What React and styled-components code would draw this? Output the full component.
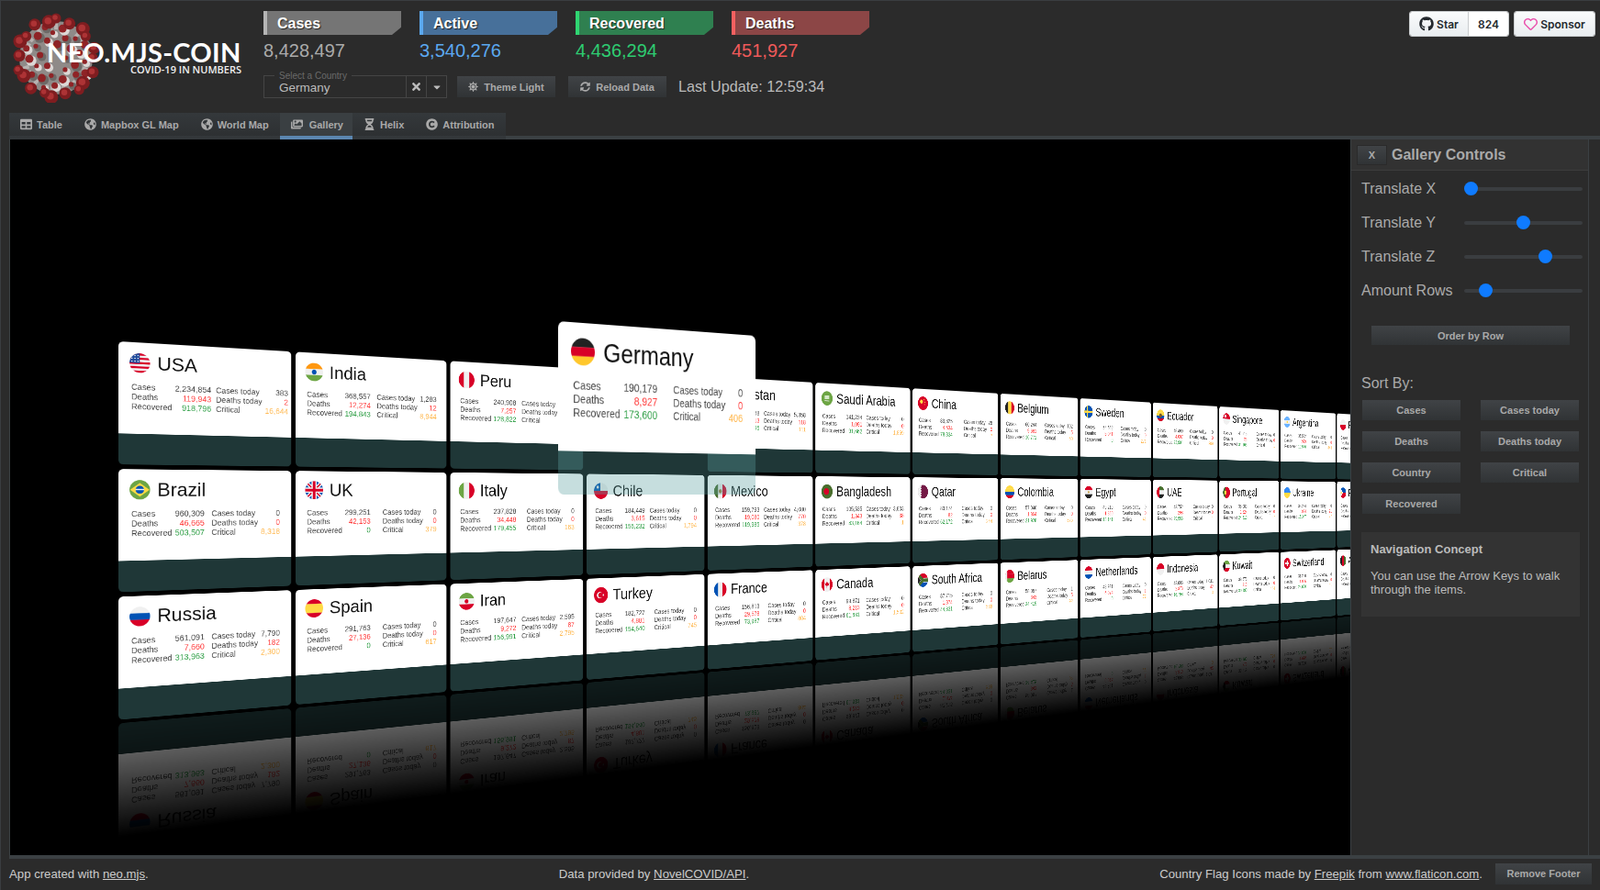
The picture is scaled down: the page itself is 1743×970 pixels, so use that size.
import React from "react";
import styled, { createGlobalStyle } from "styled-components";
import {
  FaCopyright,
  FaGithub,
  FaGlobeAmericas,
  FaHourglassHalf,
  FaImages,
  FaRegHeart,
  FaSun,
  FaSyncAlt,
  FaTable,
  FaTimes,
  FaCaretDown,
} from "react-icons/fa";

const SCENE_X = 11;
const SCENE_Y = 152;

// perspective fit: x' = (a*u + b) / (1 + c*u), y' = (d*u + e*v + f) / (1 + c*u)
const planeMatrix = ({ a, b, c, d, e, f }) =>
  `matrix3d(${a - SCENE_X * c},${d - SCENE_Y * c},0,${c},0,${e},0,0,0,0,1,0,${b - SCENE_X},${f - SCENE_Y},0,1)`;

const GRID_MATRIX = planeMatrix({ a: 0.70252, b: 129, c: 0.000235747, d: 0.1275, e: 0.627, f: 372 });
const SELECTED_MATRIX = planeMatrix({ a: 0.9704, b: 608, c: 0.000308, d: 0.1662, e: 0.8832, f: 350 });

const GlobalStyle = createGlobalStyle`
  html, body {
    margin: 0;
    background: #2b2b2b;
  }
  * {
    box-sizing: border-box;
  }
  body {
    font-family: "Liberation Sans", Arial, sans-serif;
    color: #bbb;
  }
`;

const Viewport = styled.div`
  height: 970px;
  width: 1743px;
  display: flex;
  flex-direction: column;
  overflow: hidden;
  background: #2b2b2b;
  border-top: 1px solid #3a3d40;
  border-left: 1px solid #3a3d40;
`;

const Header = styled.header`
  height: 122px;
  flex: none;
  display: flex;
  padding: 11px 5px 0 0;
`;

const Logo = styled.div`
  position: relative;
  width: 286px;
  flex: none;
`;

const LogoTitle = styled.div`
  position: absolute;
  left: 50px;
  top: 28px;
  font-family: Lato, sans-serif;
  font-weight: 700;
  font-size: 29px;
  letter-spacing: 0.3px;
  line-height: 34px;
  color: #fff;
  white-space: nowrap;
`;

const LogoSub = styled.div`
  position: absolute;
  right: 24px;
  top: 57px;
  font-family: "Open Sans", sans-serif;
  font-weight: 600;
  font-size: 11px;
  line-height: 14px;
  color: #eee;
  white-space: nowrap;
`;

const HeaderMain = styled.div`
  display: flex;
  flex-direction: column;
  gap: 13px;
`;

const Stats = styled.div`
  display: flex;
  gap: 20px;
`;

const Stat = styled.div`
  width: 150px;
`;

const StatHead = styled.div`
  height: 26px;
  padding-left: 11px;
  border-left: 4px solid ${(p) => p.$edge};
  background: ${(p) => p.$bg};
  clip-path: polygon(0 0, 100% 0, 100% 68%, calc(100% - 10px) 100%, 0 100%);
  color: #fff;
  font-weight: 700;
  font-size: 16px;
  line-height: 27px;
  text-shadow: 1px 1px 1px #222;
`;

const StatValue = styled.div`
  height: 31px;
  font-size: 20px;
  line-height: 34px;
  color: ${(p) => p.$color};
`;

const Controls = styled.div`
  display: flex;
  align-items: center;
  height: 25px;
`;

const CountryField = styled.div`
  position: relative;
  width: 200px;
  height: 25px;
  display: flex;
  border: 1px solid #454545;
`;

const CountryLabel = styled.span`
  position: absolute;
  left: 11px;
  top: -6px;
  padding: 0 5px;
  background: #2b2b2b;
  font-size: 10px;
  line-height: 11px;
  color: #6a6a6a;
`;

const CountryValue = styled.div`
  flex: 1;
  padding: 4px 0 0 16px;
  font-size: 13.5px;
  line-height: 17px;
  color: #bbb;
`;

const FieldTrigger = styled.div`
  width: 22px;
  display: flex;
  align-items: center;
  justify-content: center;
  border-left: 1px solid #454545;
  color: #bbb;
  font-size: ${(p) => p.$size}px;
`;

const GreyButton = styled.button`
  height: 23px;
  padding: 0;
  border: none;
  display: inline-flex;
  align-items: center;
  justify-content: center;
  gap: 6px;
  background: linear-gradient(#404346, #303335);
  color: #a9a9a9;
  font-family: inherit;
  font-weight: 700;
  font-size: 11px;
`;

const HeaderButton = styled(GreyButton)`
  width: 107px;
  margin-left: ${(p) => p.$gap}px;
  font-size: 11px;
`;

const LastUpdate = styled.span`
  margin-left: 13px;
  font-size: 16.2px;
  color: #bbb;
`;

const GithubButtons = styled.div`
  margin-left: auto;
  display: flex;
  gap: 5px;
  height: 28px;
`;

const GithubGroup = styled.div`
  display: flex;
  height: 28px;
  border: 1px solid #c9ccce;
  border-radius: 3px;
  overflow: hidden;
  font-family: Inter, sans-serif;
  font-weight: 600;
  font-size: 12px;
  color: #24292e;
`;

const GithubAction = styled.div`
  width: ${(p) => p.$width}px;
  display: flex;
  align-items: center;
  justify-content: center;
  gap: 3px;
  background: linear-gradient(#fafbfc, #e9edf0);
`;

const GithubCount = styled.div`
  width: 44px;
  display: flex;
  align-items: center;
  justify-content: center;
  background: #fff;
  border-left: 1px solid #c9ccce;
`;

const Tabs = styled.nav`
  flex: none;
  margin: 0 0 0 9px;
  display: flex;
  height: 29px;
  border-bottom: 4px solid #3b4043;
`;

const Tab = styled.div`
  height: 29px;
  padding: ${(p) => (p.$active ? "0 10px 0 12px" : "0 12px")};
  display: flex;
  align-items: center;
  gap: ${(p) => (p.$active ? 7 : 5)}px;
  background: ${(p) => (p.$active ? "#3a3f42" : "linear-gradient(#34383b, #2d3032)")};
  border-bottom: 4px solid ${(p) => (p.$active ? "#5b86b0" : "transparent")};
  color: #a9a9a9;
  font-weight: 700;
  font-size: 11px;
  svg {
    font-size: 13px;
  }
`;

const Main = styled.main`
  flex: 1;
  min-height: 0;
  margin-left: 9px;
  display: flex;
  border-left: 1px solid #3b4043;
  border-bottom: 4px solid #3b4043;
`;

const Scene = styled.div`
  position: relative;
  width: 1460px;
  flex: none;
  background: #000;
  overflow: hidden;
`;

const Plane = styled.div`
  position: absolute;
  left: 0;
  top: 0;
  display: grid;
  grid-template-columns: repeat(13, 300px);
  grid-auto-rows: 214px;
  gap: 8px;
  transform-origin: 0 0;
  transform: ${GRID_MATRIX};
  -webkit-box-reflect: below 6px linear-gradient(to bottom, transparent 70%, rgba(0, 0, 0, 0.5) 100%);
`;

const Card = styled.article`
  width: 300px;
  height: 214px;
  display: grid;
  grid-template-rows: 160px 54px;
  border-radius: 8px;
  overflow: hidden;
`;

const SelectedCard = styled(Card)`
  position: absolute;
  left: 0;
  top: 0;
  transform-origin: 0 0;
  transform: ${SELECTED_MATRIX};
`;

const CardBody = styled.div`
  background: #fff;
  padding: 19px 21px 0 18px;
`;

const CardFoot = styled.div`
  background: rgba(90, 160, 160, 0.345);
`;

const CardHead = styled.div`
  display: flex;
  align-items: center;
  gap: 12px;
  height: 34px;
  margin-bottom: 17px;
`;

const CardTitle = styled.h3`
  margin: 0;
  font-weight: 400;
  font-size: 33px;
  line-height: 34px;
  color: #111;
  white-space: nowrap;
`;

const FlagIcon = styled.svg`
  width: 34px;
  height: 34px;
  flex: none;
  border-radius: 50%;
`;

const CardTables = styled.div`
  width: 258px;
  margin-left: 3px;
  display: flex;
  justify-content: space-between;
  gap: 8px;
`;

const StatTable = styled.table`
  border-collapse: collapse;
  flex: none;
  font-size: 14px;
  line-height: 17px;
  td {
    padding: 0;
    white-space: nowrap;
  }
`;

const StatLabel = styled.td`
  color: #444;
`;

const StatNumber = styled.td`
  && {
    padding-left: 5px;
  }
  text-align: right;
  color: ${(p) => p.$color || "#444"};
`;

const Panel = styled.aside`
  width: 260px;
  flex: none;
  border-left: 1px solid #3b4043;
  border-right: 1px solid #3b4043;
`;

const PanelHead = styled.div`
  height: 34px;
  display: flex;
  align-items: center;
  gap: 5px;
  padding-left: 6px;
  background: #323232;
  border-bottom: 1px solid #3d3d3d;
  color: #aaa;
  font-weight: 700;
  font-size: 16px;
`;

const CloseButton = styled(GreyButton)`
  width: 33px;
  height: 22px;
  border: 1px solid #2a2a2a;
`;

const PanelBody = styled.div`
  padding: 1px 0 0 11px;
`;

const SliderRow = styled.label`
  height: 37px;
  display: flex;
  align-items: center;
  font-size: 16px;
  color: #aaa;
  span {
    width: 112px;
  }
`;

const Slider = styled.input`
  appearance: none;
  -webkit-appearance: none;
  width: 129px;
  height: 15px;
  margin: 0;
  background: transparent;
  &::-webkit-slider-runnable-track {
    height: 4px;
    border-radius: 2px;
    background: #3a3d40;
  }
  &::-webkit-slider-thumb {
    -webkit-appearance: none;
    width: 15px;
    height: 15px;
    margin-top: -5.5px;
    border-radius: 50%;
    background: #0f7bff;
  }
`;

const OrderButton = styled(GreyButton)`
  display: flex;
  width: 216px;
  height: 21px;
  margin: 20px 0 0 11px;
`;

const SortTitle = styled.div`
  margin-top: 32px;
  font-size: 16px;
  line-height: 20px;
  color: #aaa;
`;

const SortGrid = styled.div`
  display: grid;
  grid-template-columns: 107px 107px;
  column-gap: 22px;
  row-gap: 12px;
  margin: 8px 0 0 1px;
`;

const SortButton = styled(GreyButton)`
  width: 107px;
  height: 22px;
`;

const InfoBox = styled.section`
  width: 238px;
  height: 92px;
  margin-top: 20px;
  padding: 11px 10px;
  background: #333;
  font-size: 13px;
  line-height: 15px;
  color: #bbb;
  h4 {
    margin: 0 0 14px;
    font-size: 13px;
    line-height: 15px;
    color: #bbb;
  }
  p {
    margin: 0;
  }
`;

const Footer = styled.footer`
  flex: none;
  height: 34px;
  display: flex;
  align-items: center;
  justify-content: space-between;
  padding: 0 9px 2px;
  font-size: 13.2px;
  color: #ccc;
  a {
    color: #ccc;
  }
`;

const FooterRight = styled.div`
  display: flex;
  align-items: center;
`;

const RemoveButton = styled(GreyButton)`
  width: 105px;
  margin-left: 14px;
`;

// flags
const H = ({ c }) =>
  c.map((fill, i) => <rect key={i} x="0" y={(i * 34) / c.length} width="34" height={34 / c.length + 0.2} fill={fill} />);
const V = ({ c }) =>
  c.map((fill, i) => <rect key={i} x={(i * 34) / c.length} y="0" width={34 / c.length + 0.2} height="34" fill={fill} />);
const Dot = ({ x = 17, y = 17, r = 5, fill }) => <circle cx={x} cy={y} r={r} fill={fill} />;

const W = "#f0f0f0";
const R = "#d80027";
const G = "#6da544";
const B = "#0052b4";
const Y = "#ffda44";
const K = "#222";

const FLAGS = {
  USA: (
    <>
      <H c={[R, W, R, W, R, W, R, W, R]} />
      <rect width="17" height="17" fill="#1e4a9c" />
      {[4, 9, 14].map((y) => [4, 9, 14].map((x) => <Dot key={x + "" + y} x={x} y={y} r="1.2" fill={W} />))}
    </>
  ),
  India: (
    <>
      <H c={["#ff9811", W, G]} />
      <Dot r="4.5" fill={B} />
    </>
  ),
  Peru: <V c={[R, W, R]} />,
  Germany: <H c={[K, R, "#ffc72c"]} />,
  Pakistan: (
    <>
      <V c={[W, "#496e2d", "#496e2d", "#496e2d"]} />
      <Dot x="21" r="6" fill={W} />
    </>
  ),
  "Saudi Arabia": (
    <>
      <H c={[G]} />
      <rect x="10" y="10" width="14" height="9" fill="#d5e8c8" />
      <rect x="10" y="22" width="14" height="2" fill={W} />
    </>
  ),
  China: (
    <>
      <H c={[R]} />
      <Dot x="12" y="13" r="5" fill={Y} />
      <Dot x="21" y="8" r="1.6" fill={Y} />
      <Dot x="24" y="14" r="1.6" fill={Y} />
      <Dot x="22" y="20" r="1.6" fill={Y} />
    </>
  ),
  Belgium: <V c={[K, Y, R]} />,
  Sweden: (
    <>
      <H c={[B]} />
      <rect x="9" width="6" height="34" fill={Y} />
      <rect y="14" width="34" height="6" fill={Y} />
    </>
  ),
  Ecuador: (
    <>
      <H c={[Y, Y, B, R]} />
      <Dot r="6" fill="#7a5b2b" />
    </>
  ),
  Singapore: (
    <>
      <H c={[R, W]} />
      <Dot x="11" y="9" r="5" fill={W} />
    </>
  ),
  Argentina: (
    <>
      <H c={["#6ab2ff", W, "#6ab2ff"]} />
      <Dot r="3.5" fill={Y} />
    </>
  ),
  Poland: <H c={[W, R]} />,
  Brazil: (
    <>
      <H c={[G]} />
      <polygon points="17,5 33,17 17,29 1,17" fill={Y} />
      <Dot r="7" fill={B} />
      <rect x="10" y="15.5" width="14" height="2" fill={W} />
    </>
  ),
  UK: (
    <>
      <H c={[B]} />
      <path d="M0 0L34 34M34 0L0 34" stroke={W} strokeWidth="7" />
      <path d="M0 0L34 34M34 0L0 34" stroke={R} strokeWidth="2.5" />
      <rect x="12" width="10" height="34" fill={W} />
      <rect y="12" width="34" height="10" fill={W} />
      <rect x="14.5" width="5" height="34" fill={R} />
      <rect y="14.5" width="34" height="5" fill={R} />
    </>
  ),
  Italy: <V c={[G, W, R]} />,
  Chile: (
    <>
      <H c={[W, R]} />
      <rect width="16" height="17" fill={B} />
      <Dot x="9" y="9" r="3" fill={W} />
    </>
  ),
  Mexico: (
    <>
      <V c={["#496e2d", W, R]} />
      <Dot r="4.5" fill="#a2803f" />
    </>
  ),
  Bangladesh: (
    <>
      <H c={["#496e2d"]} />
      <Dot x="15" r="8" fill={R} />
    </>
  ),
  Qatar: (
    <>
      <H c={["#751a46"]} />
      <polygon points="0,0 9,0 13,3 9,6 13,9 9,12 13,15 9,18 13,21 9,24 13,27 9,30 13,34 0,34" fill={W} />
    </>
  ),
  Colombia: <H c={[Y, Y, B, R]} />,
  Egypt: (
    <>
      <H c={[R, W, K]} />
      <Dot r="3" fill="#c8a24a" />
    </>
  ),
  UAE: (
    <>
      <H c={["#496e2d", W, K]} />
      <rect width="11" height="34" fill={R} />
    </>
  ),
  Portugal: (
    <>
      <V c={["#496e2d", R, R]} />
      <Dot x="12" r="6" fill={Y} />
    </>
  ),
  Ukraine: <H c={["#338af3", Y]} />,
  Philippines: (
    <>
      <H c={[B, R]} />
      <polygon points="0,0 17,17 0,34" fill={W} />
      <Dot x="6" r="3" fill={Y} />
    </>
  ),
  Russia: <H c={[W, B, R]} />,
  Spain: <H c={[R, Y, Y, R]} />,
  Iran: (
    <>
      <H c={[G, W, R]} />
      <Dot r="4" fill={R} />
    </>
  ),
  Turkey: (
    <>
      <H c={[R]} />
      <Dot x="14" r="7" fill={W} />
      <Dot x="16" r="5.5" fill={R} />
      <Dot x="23" r="2" fill={W} />
    </>
  ),
  France: <V c={[B, W, R]} />,
  Canada: (
    <>
      <V c={[R, W, W, R]} />
      <polygon points="17,9 20,14 24,13 22,19 18,20 18,25 16,25 16,20 12,19 10,13 14,14" fill={R} />
    </>
  ),
  "South Africa": (
    <>
      <H c={[R, W, B]} />
      <path d="M0 2L17 17L0 32M17 17H34" stroke="#496e2d" strokeWidth="8" fill="none" />
      <polygon points="0,8 10,17 0,26" fill={K} />
    </>
  ),
  Belarus: (
    <>
      <H c={[R, R, G]} />
      <rect width="8" height="34" fill={W} />
    </>
  ),
  Netherlands: <H c={[R, W, B]} />,
  Indonesia: <H c={[R, W]} />,
  Kuwait: (
    <>
      <H c={[G, W, R]} />
      <polygon points="0,0 11,11 11,23 0,34" fill={K} />
    </>
  ),
  Switzerland: (
    <>
      <H c={[R]} />
      <rect x="14" y="8" width="6" height="18" fill={W} />
      <rect x="8" y="14" width="18" height="6" fill={W} />
    </>
  ),
  Afghanistan: <V c={[K, R, "#496e2d"]} />,
};

const Flag = ({ country }) => <FlagIcon viewBox="0 0 34 34">{FLAGS[country]}</FlagIcon>;

const rows = [
  [
    ["USA", "2,234,854", "119,943", "918,796", "383", "2", "16,644"],
    ["India", "368,557", "12,274", "194,843", "1,283", "12", "8,944"],
    ["Peru", "240,908", "7,257", "128,822", "0", "0", "1,098"],
    null,
    ["Pakistan", "154,768", "3,013", "56,396", "5,358", "118", "111"],
    ["Saudi Arabia", "141,234", "1,091", "91,662", "0", "0", "1,859"],
    ["China", "83,325", "4,634", "78,334", "26", "0", "7"],
    ["Belgium", "60,244", "9,661", "16,771", "102", "5", "50"],
    ["Sweden", "54,562", "5,041", "0", "0", "0", "271"],
    ["Ecuador", "48,490", "4,007", "23,901", "0", "0", "209"],
    ["Singapore", "41,615", "26", "31,163", "0", "0", "1"],
    ["Argentina", "35,552", "929", "10,540", "0", "0", "343"],
    ["Poland", "31,316", "1,329", "16,500", "0", "0", "42"],
  ],
  [
    ["Brazil", "960,309", "46,665", "503,507", "0", "0", "8,318"],
    ["UK", "299,251", "42,153", "0", "0", "0", "379"],
    ["Italy", "237,828", "34,448", "179,455", "0", "0", "163"],
    ["Chile", "184,449", "3,615", "156,232", "0", "0", "1,794"],
    ["Mexico", "159,793", "19,080", "119,985", "4,080", "770", "378"],
    ["Bangladesh", "105,535", "1,343", "43,164", "3,803", "38", "1"],
    ["Qatar", "83,174", "82", "62,172", "0", "0", "244"],
    ["Colombia", "57,046", "1,864", "21,928", "0", "0", "375"],
    ["Egypt", "49,219", "1,850", "13,141", "0", "0", "41"],
    ["UAE", "43,752", "298", "29,953", "0", "0", "1"],
    ["Portugal", "38,089", "1,524", "24,510", "0", "0", "67"],
    ["Ukraine", "33,234", "934", "15,347", "0", "21", "177"],
    ["Philippines", "28,459", "1,130", "7,650", "0", "0", "74"],
  ],
  [
    ["Russia", "561,091", "7,660", "313,963", "7,790", "182", "2,300"],
    ["Spain", "291,763", "27,136", "0", "0", "0", "617"],
    ["Iran", "197,647", "9,272", "156,991", "2,595", "87", "2,795"],
    ["Turkey", "182,727", "4,881", "154,640", "0", "0", "745"],
    ["France", "156,813", "29,578", "73,987", "0", "0", "804"],
    ["Canada", "99,871", "8,213", "61,681", "0", "0", "1,502"],
    ["South Africa", "87,715", "1,874", "44,331", "0", "0", "539"],
    ["Belarus", "58,067", "343", "34,415", "1", "5", "92"],
    ["Netherlands", "48,921", "6,074", "0", "0", "1", "77"],
    ["Indonesia", "43,803", "2,373", "16,798", "1,031", "42", "3"],
    ["Kuwait", "38,678", "313", "30,190", "0", "0", "154"],
    ["Switzerland", "31,200", "1,956", "28,800", "0", "0", "11"],
    ["Afghanistan", "27,532", "533", "7,660", "0", "0", "31"],
  ],
];

const germany = ["Germany", "190,179", "8,927", "173,600", "0", "0", "406"];

const RED = "#ff3b3b";
const GREEN = "#2e9e45";
const ORANGE = "#ffb74d";

const CardContent = ({ item }) => {
  const [name, cases, deaths, recovered, casesToday, deathsToday, critical] = item;
  return (
    <>
      <CardBody>
        <CardHead>
          <Flag country={name} />
          <CardTitle>{name}</CardTitle>
        </CardHead>
        <CardTables>
          <StatTable>
            <tbody>
              <tr>
                <StatLabel>Cases</StatLabel>
                <StatNumber>{cases}</StatNumber>
              </tr>
              <tr>
                <StatLabel>Deaths</StatLabel>
                <StatNumber $color={RED}>{deaths}</StatNumber>
              </tr>
              <tr>
                <StatLabel>Recovered</StatLabel>
                <StatNumber $color={GREEN}>{recovered}</StatNumber>
              </tr>
            </tbody>
          </StatTable>
          <StatTable>
            <tbody>
              <tr>
                <StatLabel>Cases today</StatLabel>
                <StatNumber>{casesToday}</StatNumber>
              </tr>
              <tr>
                <StatLabel>Deaths today</StatLabel>
                <StatNumber $color={RED}>{deathsToday}</StatNumber>
              </tr>
              <tr>
                <StatLabel>Critical</StatLabel>
                <StatNumber $color={ORANGE}>{critical}</StatNumber>
              </tr>
            </tbody>
          </StatTable>
        </CardTables>
      </CardBody>
      <CardFoot />
    </>
  );
};

const stats = [
  { title: "Cases", value: "8,428,497", bg: "#757575", edge: "#b5b5b5", color: "#aaa" },
  { title: "Active", value: "3,540,276", bg: "#47709a", edge: "#5ba8f0", color: "#5ba8f0" },
  { title: "Recovered", value: "4,436,294", bg: "#2f8050", edge: "#2fd672", color: "#2ecc71" },
  { title: "Deaths", value: "451,927", bg: "#8c4646", edge: "#f56060", color: "#f05a5a" },
];

const tabs = [
  { label: "Table", icon: <FaTable /> },
  { label: "Mapbox GL Map", icon: <FaGlobeAmericas /> },
  { label: "World Map", icon: <FaGlobeAmericas /> },
  { label: "Gallery", icon: <FaImages />, active: true },
  { label: "Helix", icon: <FaHourglassHalf /> },
  { label: "Attribution", icon: <FaCopyright /> },
];

const sliders = [
  { label: "Translate X", value: 0 },
  { label: "Translate Y", value: 50 },
  { label: "Translate Z", value: 71 },
  { label: "Amount Rows", value: 14 },
];

const sortKeys = ["Cases", "Cases today", "Deaths", "Deaths today", "Country", "Critical", "Recovered"];

// the virus ball behind the logo text
const spikes = Array.from({ length: 20 }, (_, i) => {
  const a = (i / 20) * Math.PI * 2 + (i % 3) * 0.06;
  const r = 40 + (i % 2) * 3;
  return { x: 49 + Math.cos(a) * r, y: 49 + Math.sin(a) * r, s: 5.5 + (i % 3) };
});
const innerSpikes = Array.from({ length: 30 }, (_, i) => {
  const a = i * 2.4;
  const r = 5 + 31 * Math.sqrt((i + 1) / 30);
  return { x: 49 + Math.cos(a) * r, y: 49 + Math.sin(a) * r, s: 2.6 + (i % 3) * 0.9 };
});

const VirusIcon = styled.svg`
  position: absolute;
  left: 11px;
  top: 2px;
`;

const Virus = () => (
  <VirusIcon width="98" height="98" viewBox="0 0 98 98">
    <circle cx="49" cy="49" r="40" fill="#8f8a88" />
    {spikes.map((s, i) => (
      <line key={i} x1="49" y1="49" x2={s.x} y2={s.y} stroke="#c9c3c1" strokeWidth="4" opacity="0.7" />
    ))}
    <circle cx="49" cy="49" r="31" fill="#8f8a88" />
    {innerSpikes.map((s, i) => (
      <g key={i}>
        <circle cx={s.x + 2} cy={s.y + 2} r={s.s + 1.2} fill={i % 2 ? "#dcd7d5" : "#6d6967"} />
        <circle cx={s.x} cy={s.y} r={s.s} fill="#8f2326" />
      </g>
    ))}
    {spikes.map((s, i) => (
      <g key={i}>
        <circle cx={s.x} cy={s.y} r={s.s} fill="#7f1d20" />
        <circle cx={s.x - 1} cy={s.y - 1} r={s.s * 0.5} fill="#ad3335" />
      </g>
    ))}
  </VirusIcon>
);

const App = () => (
  <Viewport>
    <GlobalStyle />
    <Header>
      <Logo>
        <Virus />
        <LogoTitle>NEO.MJS-COIN</LogoTitle>
        <LogoSub>COVID-19 IN NUMBERS</LogoSub>
      </Logo>
      <HeaderMain>
        <Stats>
          {stats.map((s) => (
            <Stat key={s.title}>
              <StatHead $bg={s.bg} $edge={s.edge}>
                {s.title}
              </StatHead>
              <StatValue $color={s.color}>{s.value}</StatValue>
            </Stat>
          ))}
        </Stats>
        <Controls>
          <CountryField>
            <CountryLabel>Select a Country</CountryLabel>
            <CountryValue>Germany</CountryValue>
            <FieldTrigger $size={13}>
              <FaTimes />
            </FieldTrigger>
            <FieldTrigger $size={12}>
              <FaCaretDown />
            </FieldTrigger>
          </CountryField>
          <HeaderButton $gap={11}>
            <FaSun /> Theme Light
          </HeaderButton>
          <HeaderButton $gap={14}>
            <FaSyncAlt /> Reload Data
          </HeaderButton>
          <LastUpdate>Last Update: 12:59:34</LastUpdate>
        </Controls>
      </HeaderMain>
      <GithubButtons>
        <GithubGroup>
          <GithubAction $width={63}>
            <FaGithub size={16} /> Star
          </GithubAction>
          <GithubCount>824</GithubCount>
        </GithubGroup>
        <GithubGroup>
          <GithubAction $width={87}>
            <FaRegHeart size={15} color="#ea4aaa" /> Sponsor
          </GithubAction>
        </GithubGroup>
      </GithubButtons>
    </Header>
    <Tabs>
      {tabs.map((t) => (
        <Tab key={t.label} $active={t.active}>
          {t.icon}
          {t.label}
        </Tab>
      ))}
    </Tabs>
    <Main>
      <Scene>
        <Plane>
          {rows.flat().map((item, i) =>
            item ? (
              <Card key={item[0]}>
                <CardContent item={item} />
              </Card>
            ) : (
              <div key={i} />
            )
          )}
        </Plane>
        <SelectedCard>
          <CardContent item={germany} />
        </SelectedCard>
      </Scene>
      <Panel>
        <PanelHead>
          <CloseButton>X</CloseButton>
          Gallery Controls
        </PanelHead>
        <PanelBody>
          {sliders.map((s) => (
            <SliderRow key={s.label}>
              <span>{s.label}</span>
              <Slider type="range" min="0" max="100" defaultValue={s.value} />
            </SliderRow>
          ))}
          <OrderButton>Order by Row</OrderButton>
          <SortTitle>Sort By:</SortTitle>
          <SortGrid>
            {sortKeys.map((k) => (
              <SortButton key={k}>{k}</SortButton>
            ))}
          </SortGrid>
          <InfoBox>
            <h4>Navigation Concept</h4>
            <p>You can use the Arrow Keys to walk through the items.</p>
          </InfoBox>
        </PanelBody>
      </Panel>
    </Main>
    <Footer>
      <span>
        App created with <a href="#neo">neo.mjs</a>.
      </span>
      <span>
        Data provided by <a href="#api">NovelCOVID/API</a>.
      </span>
      <FooterRight>
        <span>
          Country Flag Icons made by <a href="#freepik">Freepik</a> from <a href="#flaticon">www.flaticon.com</a>.
        </span>
        <RemoveButton>Remove Footer</RemoveButton>
      </FooterRight>
    </Footer>
  </Viewport>
);

export default App;
